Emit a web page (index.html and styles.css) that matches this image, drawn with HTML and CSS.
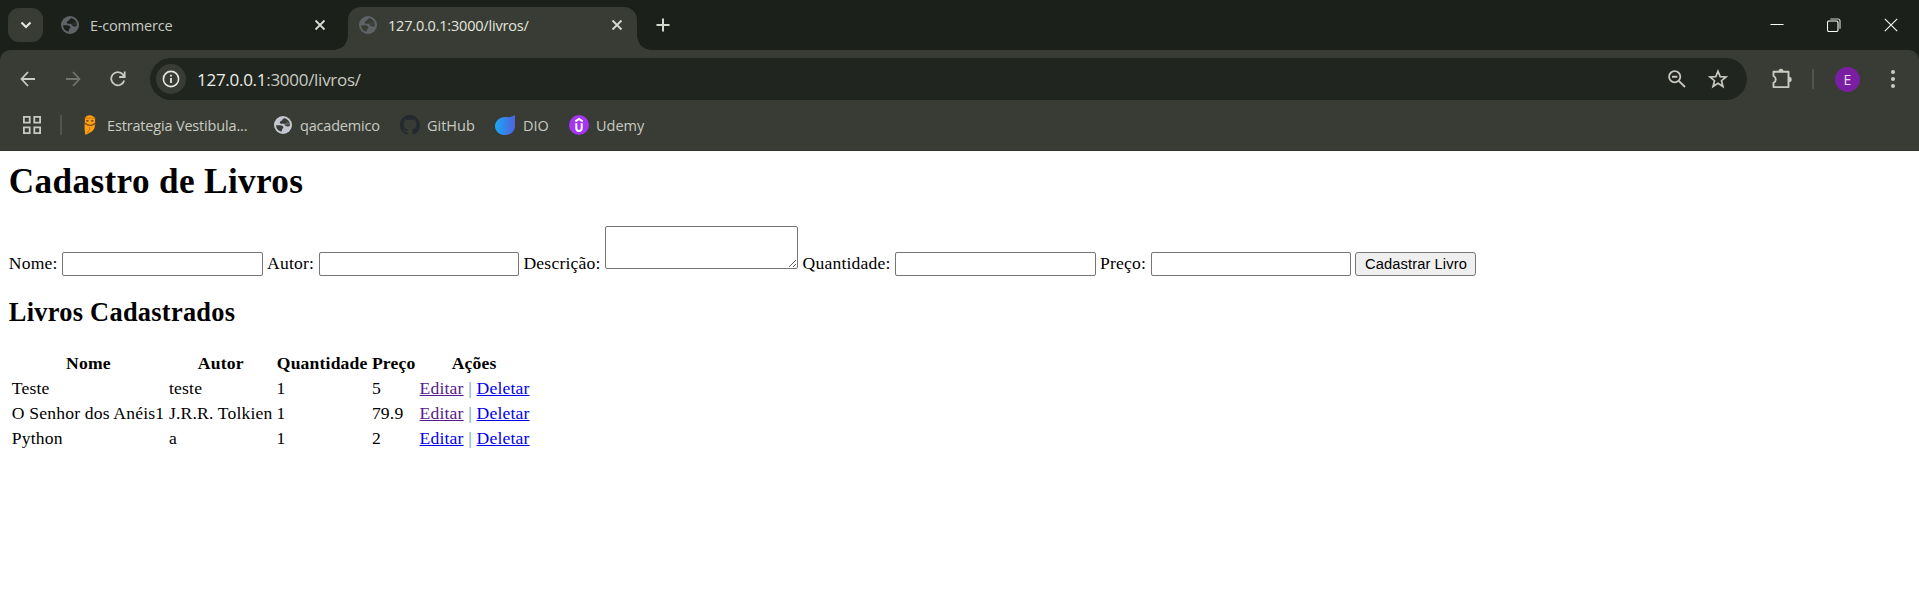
FILE: index.html
```html
<!DOCTYPE html>
<html lang="pt-BR">
<head>
<meta charset="utf-8">
<title>127.0.0.1:3000/livros/</title>
<link rel="stylesheet" href="styles.css">
</head>
<body>
<svg width="0" height="0" class="defs">
  <symbol id="globe" viewBox="0 0 18 18"><circle cx="9" cy="9" r="9" fill="currentColor"/><path class="land" d="M10.500 2.200C8 2.600 8.800 4.500 7 5C5.200 5.500 5.600 7.800 7.500 7.800H10C10.800 7.800 10.300 9.500 11.600 9.700C12.600 9.900 13 10.900 14.200 10.400L15.800 9.800C16.300 5.800 13.800 2.900 10.500 2.200zM2.100 9.300H6C8.300 9.300 9.400 10.400 9.400 12C8 12.400 8.300 14 7.400 15.700C4.500 15 2.100 12.500 2.100 9.300z"/><path d="M9.800 7.900L14 5.500L15.500 8.500L12.500 9.500z" fill="currentColor" opacity=".25"/></symbol>
  <symbol id="cross" viewBox="0 0 12 12"><path d="M1.500 1.500l9 9M10.500 1.500l-9 9" stroke="currentColor" stroke-width="1.800" fill="none"/></symbol>
</svg>
<header class="browser">
  <div class="tabs">
    <div class="tab-search"><svg width="12" height="8" viewBox="0 0 12 8"><path d="M1.500 1.500L6 6l4.500-4.500" fill="none" stroke="#e4e6df" stroke-width="2.100"/></svg></div>
    <div class="tab first"><svg class="ico"><use href="#globe"/></svg><span>E-commerce</span><svg class="x"><use href="#cross"/></svg></div>
    <div class="tab active"><svg class="ico"><use href="#globe"/></svg><span>127.0.0.1:3000/livros/</span><svg class="x"><use href="#cross"/></svg></div>
    <svg class="plus" width="14" height="14" viewBox="0 0 14 14"><path d="M7 .5v13M.5 7h13" stroke="#d5d8cf" stroke-width="2"/></svg>
    <div class="win">
      <svg width="14" height="14" viewBox="0 0 14 14"><path d="M.5 6.500h13" stroke="#fff"/></svg>
      <svg width="14" height="14" viewBox="0 0 14 14" fill="none"><rect x=".5" y="3" width="10.500" height="10.500" rx="1.500" stroke="#fff" stroke-width="1.100"/><path d="M3.300 1h7.700a2 2 0 0 1 2 2v7.700" stroke="#d0d2cd" stroke-width="1.200"/></svg>
      <svg width="14" height="14" viewBox="0 0 14 14"><path d="M.8.8l12.400 12.400M13.200.8L.8 13.200" stroke="#f0f1ee" stroke-width="1.200"/></svg>
    </div>
  </div>
  <div class="toolbar">
    <svg class="nav" width="16" height="16" viewBox="0 0 16 16"><path d="M15 8H2M8 1L1.500 8 8 15" fill="none" stroke="#c8ccc0" stroke-width="1.800"/></svg>
    <svg class="nav" width="16" height="16" viewBox="0 0 16 16"><path d="M1 8h13M8 1l6.500 7L8 15" fill="none" stroke="#70746b" stroke-width="1.800"/></svg>
    <svg class="nav" width="16" height="16" viewBox="0 0 16 16"><path d="M14.200 9.500A6.600 6.600 0 1 1 13 3.600L14.600 5.600M14.700.4V6H9.200" fill="none" stroke="#c8ccc0" stroke-width="1.800"/></svg>
    <div class="omnibox">
      <span class="info"><svg width="18" height="18" viewBox="0 0 18 18"><circle cx="9" cy="9" r="7.600" fill="none" stroke="#e4e6df" stroke-width="1.600"/><path d="M9 8v5M9 4.800v1.800" stroke="#e4e6df" stroke-width="1.800"/></svg></span>
      <span class="url"><b>127.0.0.1</b>:3000/livros/</span>
      <svg class="mag" width="18" height="18" viewBox="0 0 18 18" fill="none" stroke="#c8c6c0"><circle cx="6.700" cy="6.700" r="5.600" stroke-width="1.800"/><path d="M4 6.700h5.400M10.800 10.800l6.200 6.200" stroke-width="1.900"/></svg>
      <svg class="star" width="20" height="20" viewBox="0 0 20 20"><path d="M10 2.200l2.200 5.400 5.800.4-4.500 3.700 1.500 5.800-5-3.200-5 3.200 1.500-5.800L2 8l5.800-.4z" fill="none" stroke="#c8c6c0" stroke-width="1.700"/></svg>
    </div>
    <svg class="puzzle" width="22" height="22" viewBox="0 0 22 22"><path d="M2.500 3.700h15v15.400h-15v-4.300c3-1.300 3-5.500 0-6.800z" fill="none" stroke="#c8ccc0" stroke-width="1.900" stroke-linejoin="round"/><path d="M7.500 3.200a2.500 2.500 0 0 1 5 0zM18 8.700a2.700 2.700 0 0 1 0 5.400z" fill="#c8ccc0"/></svg>
    <i class="sep"></i>
    <span class="avatar">E</span>
    <svg class="dots" width="4" height="18" viewBox="0 0 4 18" fill="#c8ccc0"><circle cx="2" cy="2" r="2"/><circle cx="2" cy="9" r="2"/><circle cx="2" cy="16" r="2"/></svg>
  </div>
  <nav class="bookmarks">
    <svg class="grid" width="18" height="18" viewBox="0 0 18 18" fill="none" stroke="#c8c9c2" stroke-width="1.800"><path d="M.9.900h5.800v5.800H.9zM11.300.9h5.800v5.800h-5.800zM.9 11.300h5.800v5.800H.9zM11.300 11.300h5.800v5.800h-5.800z"/></svg>
    <i class="sep"></i>
    <span class="bm b1"><svg width="20" height="20" viewBox="0 0 20 20"><path d="M5 4C5-1 14-1 15 4c.4 7 .2 10-4 13l-5.500 3C4 15 4.800 9 5 4z" fill="#ff9d14"/><path d="M4.500 3.200h11" stroke="#c97908" fill="none"/><path d="M5.200 8.200c3 3 7 3 10 0" stroke="#7b4c10" fill="none" stroke-width="1.300"/><path d="M6.300 5.900h2.200M11.200 5.900h2.200" stroke="#4e3515" stroke-width="1.300"/><path d="M9.500 12c.5 3-.7 5-3 6" stroke="#c97908" fill="none"/></svg><span>Estrategia Vestibula...</span></span>
    <span class="bm b2"><svg class="ico"><use href="#globe"/></svg><span>qacademico</span></span>
    <span class="bm b3"><svg width="20" height="20" viewBox="0 0 16 16"><path fill="#24292f" d="M8 0C3.580 0 0 3.580 0 8c0 3.540 2.290 6.530 5.470 7.590.4.070.55-.17.55-.38 0-.19-.01-.82-.01-1.490-2.010.37-2.530-.49-2.690-.94-.09-.23-.48-.94-.82-1.130-.28-.15-.68-.52-.01-.53.63-.01 1.080.58 1.230.82.720 1.210 1.870.87 2.330.66.070-.52.280-.87.510-1.070-1.780-.2-3.640-.89-3.640-3.950 0-.87.310-1.590.82-2.150-.08-.2-.36-1.020.08-2.120 0 0 .67-.21 2.200.82.640-.18 1.320-.27 2-.27s1.360.09 2 .27c1.530-1.040 2.200-.82 2.200-.82.440 1.100.160 1.920.080 2.120.510.560.820 1.270.820 2.150 0 3.070-1.870 3.750-3.650 3.950.290.250.540.730.540 1.480 0 1.070-.01 1.930-.01 2.200 0 .21.150.46.550.38A8.010 8.010 0 0 0 16 8c0-4.420-3.580-8-8-8z"/></svg><span>GitHub</span></span>
    <span class="bm b4"><svg width="20" height="20" viewBox="0 0 20 20"><defs><linearGradient id="dio"><stop stop-color="#18a7f8"/><stop offset="1" stop-color="#5360dc"/></linearGradient></defs><path d="M20 0v11c0 6-5 9-10 9S0 16.500 0 11.200 5 2 10 2c3 0 3.500.3 5 .1S18 1 20 0z" fill="url(#dio)"/></svg><span>DIO</span></span>
    <span class="bm b5"><svg width="20" height="20" viewBox="0 0 20 20"><circle cx="10" cy="10" r="10" fill="#a435f0"/><path d="M6.300 6.300L10 4l3.700 2.300M7.300 8.300v5c0 3.600 5.400 3.600 5.400 0v-5" fill="none" stroke="#fff" stroke-width="2"/></svg><span>Udemy</span></span>
  </nav>
</header>
<main class="page">
  <h1>Cadastro de Livros</h1>
  <form>
    <label>Nome:</label> <input type="text">
    <label>Autor:</label> <input type="text">
    <label>Descrição:</label> <textarea></textarea>
    <label>Quantidade:</label> <input type="text">
    <label>Preço:</label> <input type="text">
    <button type="button">Cadastrar Livro</button>
  </form>
  <h2>Livros Cadastrados</h2>
  <table>
    <colgroup><col class="c1"><col class="c2"><col class="c3"><col class="c4"><col class="c5"></colgroup>
    <tr><th>Nome</th><th>Autor</th><th>Quantidade</th><th>Preço</th><th>Ações</th></tr>
    <tr><td>Teste</td><td>teste</td><td>1</td><td>5</td><td><a class="seen" href="#e1">Editar</a> <i>|</i> <a href="#d1">Deletar</a></td></tr>
    <tr><td>O Senhor dos Anéis1</td><td>J.R.R. Tolkien</td><td>1</td><td>79.9</td><td><a class="seen" href="#e2">Editar</a> <i>|</i> <a href="#d2">Deletar</a></td></tr>
    <tr><td>Python</td><td>a</td><td>1</td><td>2</td><td><a href="#e3">Editar</a> <i>|</i> <a href="#d3">Deletar</a></td></tr>
  </table>
</main>
</body>
</html>
```
FILE: styles.css
```css
* { box-sizing: border-box; }
body { margin: 0; height: 616px; overflow: hidden; background: #fff; }
.defs { position: absolute; }
svg { display: block; flex: none; }
.browser { height: 151px; background: #1c201b; font-family: "Open Sans", sans-serif; color: #c8cbc2; }
.land { fill: var(--land); }

.tabs { display: flex; height: 50px; align-items: center; padding-left: 8px; }
.tab-search { width: 35px; height: 34px; border-radius: 11px; background: #383c35; display: flex; align-items: center; justify-content: center; }
.tab { display: flex; align-items: center; height: 43px; margin-top: 7px; padding-bottom: 7px; font-size: 14.5px; letter-spacing: -.2px; white-space: nowrap; }
.tab .ico, .bm .ico { width: 18px; height: 18px; }
.tab .ico { color: #5f6368; --land: #1c201b; }
.tab .x { width: 12px; height: 12px; margin-left: auto; color: #d8dbd2; }
.first { width: 287px; margin-left: 18px; padding-right: 22px; }
.first span { margin-left: 11px; }
.active { position: relative; width: 289px; background: #383c35; border-radius: 13px 13px 0 0; padding-left: 11px; padding-right: 14px; color: #e4e6df; }
.active .ico { --land: #383c35; }
.active span { margin-left: 11px; }
.active::before, .active::after { content: ""; position: absolute; bottom: 0; width: 14px; height: 14px; }
.active::before { left: -14px; background: radial-gradient(circle at 0 0, transparent 13.5px, #383c35 14px); }
.active::after { right: -14px; background: radial-gradient(circle at 100% 0, transparent 13.5px, #383c35 14px); }
.plus { margin-left: 19px; }
.win { margin-left: auto; display: flex; gap: 43px; padding-right: 21px; }

.toolbar { height: 50px; display: flex; align-items: center; padding: 8px 21px 0 20px; background: #383c35; border-radius: 10px 10px 0 0; }
.toolbar > * { flex: none; }
.nav { margin-right: 29px; margin-top: -1px; }
.omnibox { width: 1597px; height: 42px; margin-left: -4px; border-radius: 21px; background: #21251f; display: flex; align-items: center; padding: 0 19px 0 6px; }
.toolbar .nav:nth-child(3) { margin-right: 28px; }
.info { width: 30px; height: 30px; border-radius: 50%; background: #383c35; display: flex; align-items: center; justify-content: center; }
.url { margin-left: 11px; font-size: 17px; letter-spacing: -.28px; }
.url b { font-weight: 400; color: #eceee8; }
.mag { margin-left: auto; }
.star { margin-left: 22px; }
.puzzle { margin-left: 24px; margin-top: -1px; }
.sep { width: 2px; height: 20px; background: #50544c; }
.toolbar .sep { margin-left: 19px; }
.avatar { width: 25px; height: 25px; margin-left: 21px; border-radius: 50%; background: #7b1fa2; color: #eadcf0; font-size: 14px; line-height: 25px; text-align: center; }
.dots { margin-left: 31px; }

.bookmarks { height: 51px; display: flex; align-items: center; background: #383c35; border-bottom: 1px solid #30342e; padding-left: 23px; font-size: 14.5px; }
.bookmarks .sep { margin: 0 18px 0 19px; }
.bm { display: flex; align-items: center; white-space: nowrap; }
.bm .ico { color: #c4c7cf; --land: #383c35; }
.b1 { width: 194px; gap: 7px; letter-spacing: -.17px; }
.b2 { width: 126px; gap: 8px; letter-spacing: -.2px; }
.b3 { width: 95px; gap: 7px; }
.b4 { width: 74px; gap: 8px; }
.b5 { gap: 7px; }

.page { padding: 10px 9px 0 8.8px; font: 17.6px "Liberation Serif", serif; color: #000; }
h1 { margin: 0 0 24px; font-size: 35.2px; line-height: 41px; letter-spacing: .36px; }
form { height: 49px; white-space: nowrap; }
label { letter-spacing: .2px; }
input { width: 200.5px; height: 24px; margin: 0; padding: 1px 2px; border: 1px solid #767676; border-radius: 2px; font: 14.67px "Liberation Sans", sans-serif; }
textarea { width: 193px; height: 43px; margin: 0; padding: 2px; border: 1px solid #767676; border-radius: 2px; font: 14.67px "Liberation Mono", monospace; vertical-align: baseline; }
button { width: 121px; height: 24px; padding: 0; border: 1px solid #767676; border-radius: 3px; background: #efefef; color: #000; font: 14.67px "Liberation Sans", sans-serif; letter-spacing: .12px; }
h2 { margin: 22px 0; font-size: 26.4px; line-height: 30px; letter-spacing: .27px; }
table { table-layout: fixed; width: 523px; border-spacing: 2px; letter-spacing: .18px; }
.c1 { width: 155.2px; }
.c2 { width: 105.5px; }
.c3 { width: 93.4px; }
.c4 { width: 45.7px; }
th, td { padding: 1px; height: 23px; line-height: 20px; white-space: nowrap; }
td i { font-style: normal; color: #5a8fc4; }
a { color: #0000ee; }
.seen { color: #551a8b; }
```
